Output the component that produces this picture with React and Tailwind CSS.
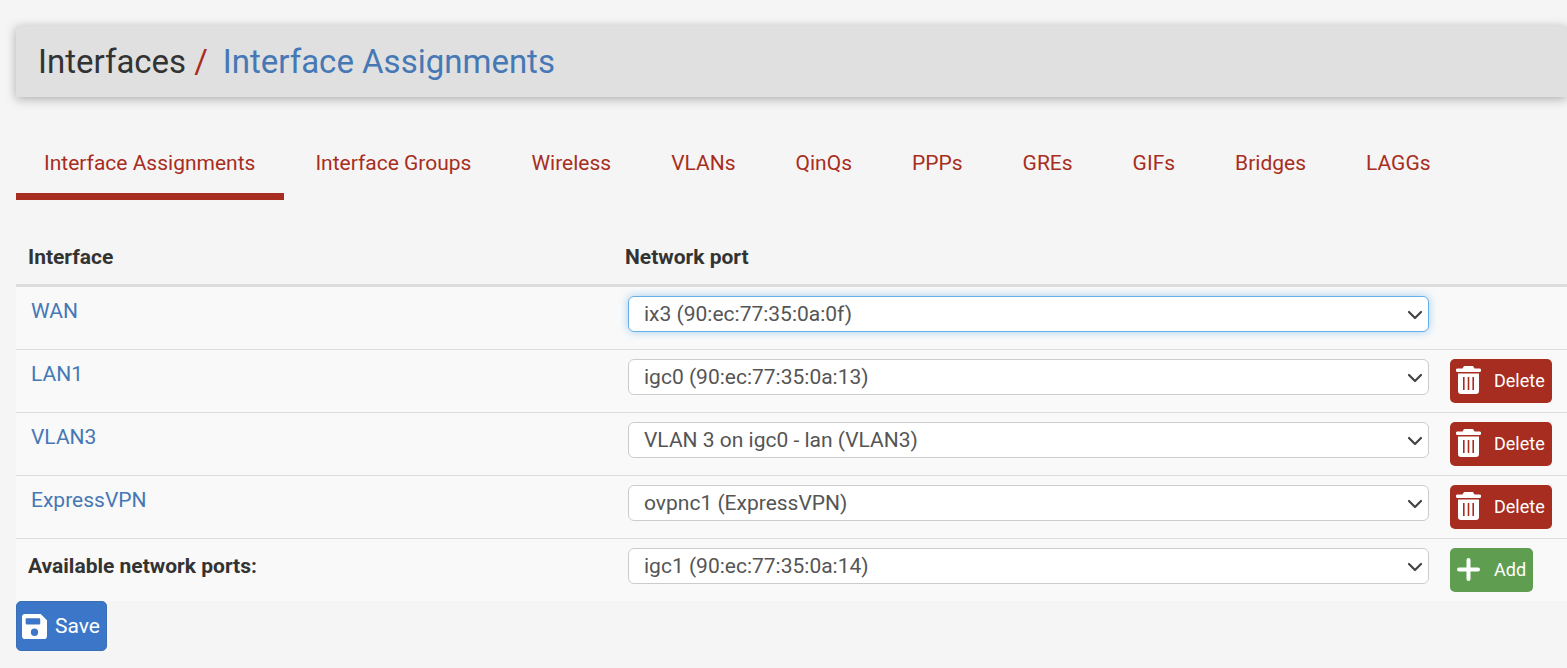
import { ChevronDown } from 'lucide-react';

const tabs = ['Interface Assignments', 'Interface Groups', 'Wireless', 'VLANs', 'QinQs', 'PPPs', 'GREs', 'GIFs', 'Bridges', 'LAGGs'];

const rows = [
  { name: 'WAN', port: 'ix3 (90:ec:77:35:0a:0f)', focused: true },
  { name: 'LAN1', port: 'igc0 (90:ec:77:35:0a:13)' },
  { name: 'VLAN3', port: 'VLAN 3 on igc0 - lan (VLAN3)' },
  { name: 'ExpressVPN', port: 'ovpnc1 (ExpressVPN)' },
];

function TrashIcon() {
  return (
    <svg viewBox="0 0 25 28" className="h-[28px] w-[25px]" fill="currentColor">
      <path d="M8 0h9l1.5 2.5H23.5a1.5 1.5 0 0 1 0 3.5H1.5a1.5 1.5 0 0 1 0-3.5H6.5Z" />
      <path fillRule="evenodd" d="M2 7.5h21V25a3 3 0 0 1-3 3H5a3 3 0 0 1-3-3ZM7 11v13h1.6V11Zm4.7 0v13h1.6V11Zm4.7 0v13H18V11Z" />
    </svg>
  );
}

function PortSelect({ value, focused }) {
  return (
    <div
      className={
        'flex h-9 w-[801px] items-center justify-between rounded-md border bg-white pl-[15px] pr-[1px] pt-[2px] text-[21px] text-[#555555] ' +
        (focused ? 'border-[#66afe9] shadow-[0_0_8px_rgba(102,175,233,0.6)]' : 'border-[#cccccc]')
      }
    >
      <span>{value}</span>
      <ChevronDown className="h-6 w-6 text-[#444444]" strokeWidth={2.2} />
    </div>
  );
}

function App() {
  return (
    <div className="min-h-screen bg-[#f5f5f5] pl-4 pt-[26px] font-['Roboto',sans-serif] text-[#333333]">
      {/* Page title */}
      <div className="flex h-[71px] items-center bg-[#e0e0e0] pl-[22px] text-[33px] shadow-[0_2px_10px_rgba(0,0,0,0.3)]">
        <span>Interfaces</span>
        <span className="ml-[8px] text-[#a82d21]">/</span>
        <span className="ml-[15px] text-[#4578b5]">Interface Assignments</span>
      </div>

      {/* Tabs */}
      <div className="mt-[29px] flex h-[74px] gap-[3px] text-[21px] text-[#a82d21]">
        {tabs.map((tab, i) => (
          <div
            key={tab}
            className={
              'flex items-start pt-[22px] pl-[28px] pr-[29px] ' +
              (i === 0 ? 'border-b-[7px] border-[#a82d21]' : '')
            }
          >
            {tab}
          </div>
        ))}
      </div>

      {/* Table */}
      <div className="mt-[29px] text-[21px]">
        <div className="flex h-[58px] border-b-[3px] border-[#dddddd] pt-[13px] font-bold">
          <div className="w-[597px] pl-3">Interface</div>
          <div className="pl-3">Network port</div>
        </div>

        {rows.map((row, i) => (
          <div
            key={row.name}
            className={
              'flex bg-[#f9f9f9] ' + (i > 0 ? 'h-[63px] border-t border-[#dddddd]' : 'h-[62px]')
            }
          >
            <div className="w-[612px] pl-[15px] pt-[9px] text-[#4578b5]">{row.name}</div>
            <div className="pt-[9px]">
              <PortSelect value={row.port} focused={row.focused} />
            </div>
            {!row.focused && (
              <div className="ml-[21px] pt-[9px]">
                <button className="flex h-[44px] w-[102px] items-center rounded-[5px] bg-[#a82d21] pb-[2px] pl-[6px] text-[18px] text-white">
                  <TrashIcon />
                  <span className="ml-[13px]">Delete</span>
                </button>
              </div>
            )}
          </div>
        ))}

        <div className="flex h-[63px] border-t border-[#dddddd] bg-[#f9f9f9]">
          <div className="w-[612px] pl-3 pt-[12px] font-bold">Available network ports:</div>
          <div className="pt-[9px]">
            <PortSelect value="igc1 (90:ec:77:35:0a:14)" />
          </div>
          <div className="ml-[21px] pt-[9px]">
            <button className="flex h-[44px] w-[83px] items-center rounded-[5px] bg-[#5f9e50] pb-[2px] pl-[7px] text-[18px] text-white">
              <svg viewBox="0 0 23 23" className="h-[23px] w-[23px]" fill="currentColor">
                <rect x="9.5" y="0" width="4" height="23" rx="2" />
                <rect x="0" y="9.5" width="23" height="4" rx="2" />
              </svg>
              <span className="ml-[14px]">Add</span>
            </button>
          </div>
        </div>
      </div>

      <button className="flex h-[50px] w-[91px] items-center rounded-[5px] border border-[#3a6eb5] bg-[#3c76c8] pl-[5px] text-[21px] text-white">
        <svg viewBox="0 0 24 24" className="h-[25px] w-[25px]" fill="currentColor">
          <path fillRule="evenodd" d="M3 0h15l6 6v15a3 3 0 0 1-3 3H3a3 3 0 0 1-3-3V3a3 3 0 0 1 3-3Zm1.5 4a1 1 0 0 0-1 1v4a1 1 0 0 0 1 1h12a1 1 0 0 0 1-1V5a1 1 0 0 0-1-1h-12ZM12 14a3.5 3.5 0 1 0 0 7 3.5 3.5 0 0 0 0-7Z" />
        </svg>
        <span className="ml-[8px] pt-[2px]">Save</span>
      </button>
    </div>
  );
}

export default App;
